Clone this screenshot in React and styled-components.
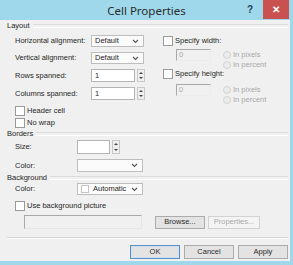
import React from 'react';
import styled, { createGlobalStyle } from 'styled-components';

const Global = createGlobalStyle`
  html, body { margin: 0; padding: 0; background: #f0f0f0; }
  body { font-family: "Liberation Sans", Arial, sans-serif; }
  * { box-sizing: border-box; }
`;

const Window = styled.div`
  width: 293px;
  height: 265px;
  display: flex;
  flex-direction: column;
  background: #9fd8ea;
  overflow: hidden;
`;

const TitleBar = styled.div`
  height: 20px;
  display: grid;
  grid-template-columns: 60px 1fr 60px;
  align-items: start;
  flex-shrink: 0;
`;

const Title = styled.div`
  grid-column: 2;
  text-align: center;
  font-family: "Noto Sans", sans-serif;
  font-size: 11.5px;
  line-height: 21px;
  color: #2b2b2b;
`;

const Controls = styled.div`
  display: flex;
  justify-content: flex-end;
  align-items: flex-start;
  padding-right: 4px;
`;

const Help = styled.div`
  width: 20px;
  height: 19px;
  font-size: 10px;
  font-weight: bold;
  color: #1f3f5f;
  line-height: 19px;
  text-align: center;
  margin-right: 3px;
`;

const Close = styled.div`
  width: 26px;
  height: 19px;
  background: #c9514f;
  color: #fff;
  font-size: 10px;
  font-weight: bold;
  line-height: 19px;
  text-align: center;
`;

const Body = styled.div`
  flex: 1;
  background: #f0f0f0;
  margin-right: 3px;
  margin-bottom: 4px;
  padding: 1px 2px 0 7px;
  display: flex;
  flex-direction: column;
  font-size: 7.5px;
  color: #262626;
`;

const SectionHead = styled.div`
  display: flex;
  align-items: center;
  gap: 3px;
  height: 10px;
  line-height: 10px;
  margin-top: ${p => p.$mt || 0}px;
  &::after {
    content: '';
    flex: 1;
    height: 2px;
    border-top: 1px solid #dcdcdc;
    border-bottom: 1px solid #ffffff;
  }
`;

const LayoutRow = styled.div`
  display: flex;
  margin-top: 4px;
`;

const LeftCol = styled.div`
  width: 156px;
  padding-left: 8px;
  display: flex;
  flex-direction: column;
`;

const FormGrid = styled.div`
  display: grid;
  grid-template-columns: ${p => p.$label}px auto;
  row-gap: ${p => p.$gap || 5}px;
  align-items: center;
  padding-left: ${p => p.$pl || 0}px;
  margin-top: ${p => p.$mt || 0}px;
`;

const Label = styled.div`
  line-height: 12px;
  white-space: nowrap;
`;

const Select = styled.div`
  width: ${p => p.$w}px;
  height: ${p => p.$h || 12}px;
  border: 1px solid #bdbdbd;
  background: #fbfbfb;
  display: flex;
  align-items: center;
  padding: 0 4px 0 3px;
  gap: 4px;
  line-height: 10px;
`;

const SelText = styled.span`
  flex: 1;
`;

const Swatch = styled.span`
  width: 8px;
  height: 8px;
  border: 1px solid #c4c4c4;
  background: #fff;
`;

const Chevron = () => (
  <svg width="7" height="5" viewBox="0 0 7 5">
    <path d="M1 1 L3.5 3.5 L6 1" fill="none" stroke="#555" strokeWidth="1.1" />
  </svg>
);

const SpinWrap = styled.div`
  display: flex;
  align-items: center;
  gap: 2px;
`;

const NumBox = styled.div`
  width: ${p => p.$w}px;
  height: ${p => p.$h || 13}px;
  border: 1px solid #b5b5b5;
  background: #fff;
  padding-left: 3px;
  line-height: 11px;
`;

const Spinner = styled.div`
  width: 8px;
  height: ${p => p.$h || 13}px;
  border: 1px solid #c8c8c8;
  background: #efefef;
  display: flex;
  flex-direction: column;
  align-items: center;
  justify-content: space-around;
`;

const Arrow = styled.span`
  width: 0;
  height: 0;
  border-left: 2px solid transparent;
  border-right: 2px solid transparent;
  ${p => p.$down ? 'border-top: 2px solid #444;' : 'border-bottom: 2px solid #444;'}
`;

const CheckRow = styled.label`
  display: flex;
  align-items: center;
  gap: 2px;
  height: 10px;
  line-height: 10px;
  margin-top: ${p => p.$mt || 0}px;
  white-space: nowrap;
`;

const Box = styled.span`
  width: 10px;
  height: 10px;
  border: 1px solid #9a9a9a;
  background: #fff;
  flex-shrink: 0;
`;

const RightCol = styled.div`
  flex: 1;
  display: flex;
  flex-direction: column;
`;

const SubBlock = styled.div`
  display: flex;
  gap: 12px;
  padding-left: 13px;
  margin-top: ${p => p.$mt || 0}px;
`;

const DisabledInput = styled.div`
  width: 35px;
  height: 12px;
  border-top: 1px solid #a9a9a9;
  border-left: 1px solid #a9a9a9;
  border-right: 1px solid #ececec;
  border-bottom: 1px solid #ececec;
  color: #a8a8a8;
  padding-left: 2px;
  line-height: 10px;
`;

const RadioGroup = styled.div`
  display: flex;
  flex-direction: column;
  padding-top: 1px;
`;

const RadioRow = styled.div`
  display: flex;
  align-items: center;
  gap: 2px;
  height: 10px;
  line-height: 10px;
  color: #a9a9a9;
`;

const Radio = styled.span`
  width: 8px;
  height: 8px;
  border-radius: 50%;
  border: 1px solid #d3d3d3;
  background: #ececec;
`;

const Indent = styled.div`
  padding-left: 8px;
  display: flex;
  flex-direction: column;
`;

const PictureRow = styled.div`
  display: flex;
  align-items: center;
  margin-top: 4px;
  padding-left: 17px;
`;

const PathField = styled.div`
  width: 118px;
  height: 14px;
  border-top: 1px solid #a9a9a9;
  border-left: 1px solid #a9a9a9;
  border-right: 1px solid #e6e6e6;
  border-bottom: 1px solid #e6e6e6;
  margin-right: 13px;
`;

const Button = styled.div`
  width: ${p => p.$w || 50}px;
  height: ${p => p.$h || 14}px;
  border: 1px solid ${p => p.$default ? '#5b8fc7' : p.$disabled ? '#d2d2d2' : '#acacac'};
  background: ${p => p.$disabled ? '#f4f4f4' : '#e3e3e3'};
  color: ${p => p.$disabled ? '#a8a8a8' : '#2a2a2a'};
  display: flex;
  align-items: center;
  justify-content: center;
  line-height: 10px;
  ${p => p.$default ? 'box-shadow: inset 0 0 0 1px #cfe0f2;' : ''}
`;

const SmallButtons = styled.div`
  display: flex;
  gap: 3px;
`;

const Separator = styled.div`
  height: 2px;
  border-top: 1px solid #d5d5d5;
  border-bottom: 1px solid #fff;
  margin-top: 8px;
`;

const Footer = styled.div`
  display: flex;
  justify-content: flex-end;
  gap: 4px;
  margin-top: 6px;
`;

const Spin = ({ w, h }) => (
  <SpinWrap>
    <NumBox $w={w} $h={h}>{w > 40 ? '1' : ''}</NumBox>
    <Spinner $h={h}><Arrow /><Arrow $down /></Spinner>
  </SpinWrap>
);

export default function App() {
  return (
    <>
      <Global />
      <Window>
        <TitleBar>
          <Title>Cell Properties</Title>
          <Controls>
            <Help>?</Help>
            <Close>✕</Close>
          </Controls>
        </TitleBar>
        <Body>
          <SectionHead>Layout</SectionHead>
          <LayoutRow>
            <LeftCol>
              <FormGrid $label={76}>
                <Label>Horizontal alignment:</Label>
                <Select $w={53}><SelText>Default</SelText><Chevron /></Select>
                <Label>Vertical alignment:</Label>
                <Select $w={53}><SelText>Default</SelText><Chevron /></Select>
                <Label>Rows spanned:</Label>
                <Spin w={44} h={13} />
                <Label>Columns spanned:</Label>
                <Spin w={44} h={13} />
              </FormGrid>
              <CheckRow $mt={6}><Box />Header cell</CheckRow>
              <CheckRow $mt={2}><Box />No wrap</CheckRow>
            </LeftCol>
            <RightCol>
              <CheckRow $mt={1}><Box />Specify width:</CheckRow>
              <SubBlock $mt={3}>
                <DisabledInput>0</DisabledInput>
                <RadioGroup>
                  <RadioRow><Radio />In pixels</RadioRow>
                  <RadioRow><Radio />In percent</RadioRow>
                </RadioGroup>
              </SubBlock>
              <CheckRow $mt={-1}><Box />Specify height:</CheckRow>
              <SubBlock $mt={5}>
                <DisabledInput>0</DisabledInput>
                <RadioGroup>
                  <RadioRow><Radio />In pixels</RadioRow>
                  <RadioRow><Radio />In percent</RadioRow>
                </RadioGroup>
              </SubBlock>
            </RightCol>
          </LayoutRow>
          <SectionHead $mt={1}>Borders</SectionHead>
          <FormGrid $label={62} $pl={8} $mt={1} $gap={5}>
            <Label>Size:</Label>
            <Spin w={33} h={14} />
            <Label>Color:</Label>
            <Select $w={66} $h={13}><SelText></SelText><Chevron /></Select>
          </FormGrid>
          <SectionHead $mt={1}>Background</SectionHead>
          <FormGrid $label={62} $pl={8} $mt={0}>
            <Label>Color:</Label>
            <Select $w={66} $h={12}><Swatch /><SelText>Automatic</SelText><Chevron /></Select>
          </FormGrid>
          <Indent>
            <CheckRow $mt={6}><Box />Use background picture</CheckRow>
          </Indent>
          <PictureRow>
            <PathField />
            <SmallButtons>
              <Button $w={50} $h={13}>Browse...</Button>
              <Button $w={52} $h={13} $disabled>Properties...</Button>
            </SmallButtons>
          </PictureRow>
          <Separator />
          <Footer>
            <Button $default>OK</Button>
            <Button>Cancel</Button>
            <Button>Apply</Button>
          </Footer>
        </Body>
      </Window>
    </>
  );
}
